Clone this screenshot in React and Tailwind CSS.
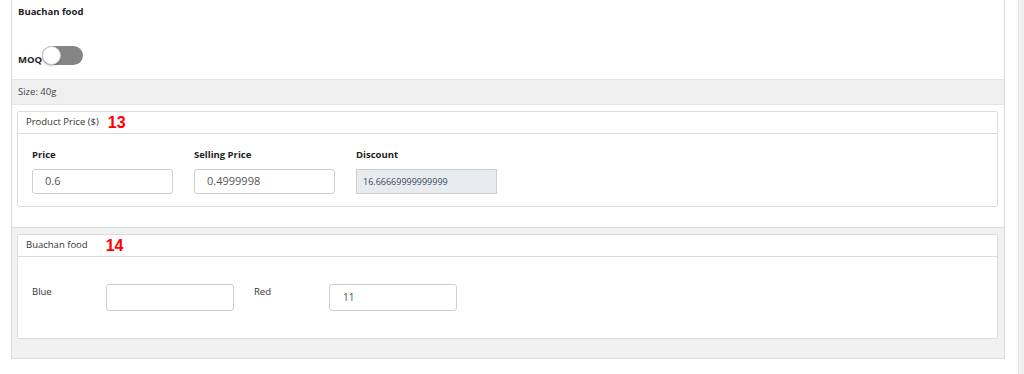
import React from 'react';

const font = { fontFamily: '"Open Sans", "Liberation Sans", sans-serif' };

const Toggle = () => (
  <div className="relative w-[41px] h-[19px] rounded-full bg-[#858585]">
    <div className="absolute left-0 top-0 w-[19px] h-[19px] rounded-full bg-white border border-[#cfcfcf] shadow-[0_1px_2px_rgba(0,0,0,0.25)]" />
  </div>
);

const CardHeader = ({ title, num, gap }) => (
  <div className="h-[22px] flex items-center px-[8px] border-b border-[#dcdcdc]">
    <span className="text-[9.5px] text-[#333]">{title}</span>
    <span className={`${gap} text-[16px] font-bold text-[#ff0000] leading-none`} style={{ fontFamily: '"Liberation Sans", Arial, sans-serif' }}>
      {num}
    </span>
  </div>
);

export default function App() {
  return (
    <div className="w-[1024px] h-[374px] bg-white flex overflow-hidden" style={font}>
      <div className="ml-[11px] w-[994px] h-[359px] border-x border-b border-[#dcdcdc] flex flex-col">
        {/* top */}
        <div className="h-[79px] px-[6px] pt-[5px]">
          <div className="text-[9.5px] font-bold text-[#222]">Buachan food</div>
          <div className="mt-[27px] flex items-end">
            <span className="text-[9.5px] font-bold text-[#222] leading-none mb-[1px]">MOQ</span>
            <Toggle />
          </div>
        </div>

        {/* size band */}
        <div className="h-[26px] bg-[#f0f0f0] border-y border-[#e3e3e3] px-[6px] flex items-center">
          <span className="text-[9.5px] text-[#444]">Size: 40g</span>
        </div>

        {/* product price */}
        <div className="bg-white px-[5px] pt-[6px] pb-[20px]">
          <div className="mr-[1px] h-[96px] border border-[#dcdcdc] rounded-[2px] bg-white">
            <CardHeader title="Product Price ($)" num="13" gap="ml-[9px]" />
            <div className="pl-[14px] pt-[14px] flex gap-[21px]">
              <div className="w-[141px]">
                <div className="text-[9.5px] font-bold text-[#222] h-[20px]">Price</div>
                <div className="mt-[1px] h-[25px] border border-[#cfcfcf] rounded-[3px] flex items-center pl-[12px] text-[11px] text-[#555]">0.6</div>
              </div>
              <div className="w-[141px]">
                <div className="text-[9.5px] font-bold text-[#222] h-[20px]">Selling Price</div>
                <div className="mt-[1px] h-[25px] border border-[#cfcfcf] rounded-[3px] flex items-center pl-[12px] text-[11px] text-[#555]">0.4999998</div>
              </div>
              <div className="w-[141px]">
                <div className="text-[9.5px] font-bold text-[#222] h-[20px]">Discount</div>
                <div className="mt-[1px] h-[25px] border border-[#cfcfcf] bg-[#e9ecef] flex items-center pl-[6px] text-[9px] text-[#34495e]">16.66669999999999</div>
              </div>
            </div>
          </div>
        </div>

        {/* buachan food */}
        <div className="flex-1 bg-[#f1f1f1] border-t border-[#dcdcdc] px-[5px] pt-[6px]">
          <div className="mr-[1px] h-[105px] border border-[#dcdcdc] rounded-[2px] bg-white">
            <CardHeader title="Buachan food" num="14" gap="ml-[18px]" />
            <div className="pl-[14px] pt-[27px] flex items-start">
              <div className="w-[74px] text-[9.5px] text-[#333] pt-[1px]">Blue</div>
              <div className="w-[128px] h-[27px] border border-[#cfcfcf] rounded-[3px]" />
              <div className="ml-[20px] w-[75px] text-[9.5px] text-[#333] pt-[1px]">Red</div>
              <div className="w-[128px] h-[27px] border border-[#cfcfcf] rounded-[3px] flex items-center pl-[13px] text-[10px] text-[#555]">11</div>
            </div>
          </div>
        </div>
      </div>
      <div className="ml-[13px] w-[6px] h-full bg-[#f1f1f1] border-l border-[#e6e6e6]" />
    </div>
  );
}
